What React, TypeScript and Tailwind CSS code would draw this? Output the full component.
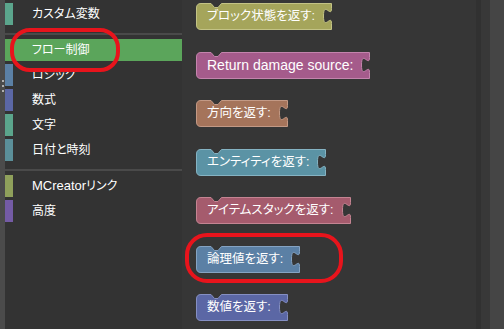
import { useLayoutEffect, useRef, useState } from "react"

const font = { fontFamily: '"Liberation Sans", "Noto Sans CJK JP", sans-serif' }

type Category = { label: string; latin?: string; colour: string; selected?: boolean } | "sep"

const categories: Category[] = [
  { label: "カスタム変数", colour: "bg-[#5ba58c]" },
  "sep",
  { label: "フロー制御", colour: "bg-[#5ba55b]", selected: true },
  { label: "ロジック", colour: "bg-[#5b80a5]" },
  { label: "数式", colour: "bg-[#5b67a5]" },
  { label: "文字", colour: "bg-[#5ba58c]" },
  { label: "日付と時刻", colour: "bg-[#5b8f99]" },
  "sep",
  { latin: "MCreator", label: "リンク", colour: "bg-[#8fa05b]" },
  { label: "高度", colour: "bg-[#745ba5]" },
]

const blocks = [
  { label: "ブロック状態を返す:", fill: "#a5a55b", stroke: "#c3c386", cjk: true },
  { label: "Return damage source:", fill: "#a55b8b", stroke: "#c484ad", cjk: false },
  { label: "方向を返す:", fill: "#a5745b", stroke: "#c39985", cjk: true },
  { label: "エンティティを返す:", fill: "#5b93a5", stroke: "#85b3c3", cjk: true },
  { label: "アイテムスタックを返す:", fill: "#a55b6d", stroke: "#c48492", cjk: true },
  { label: "論理値を返す:", fill: "#5b80a5", stroke: "#85a3c3", cjk: true },
  { label: "数値を返す:", fill: "#5b67a5", stroke: "#858fc3", cjk: true },
]

function blockPath(w: number, h: number) {
  return [
    "M 0.5,5",
    "Q 0.5,0.5 5,0.5",
    "H 15 L 18.5,4.5 H 22 L 25.5,0.5",
    `H ${w - 0.5}`,
    "V 5.5",
    `c 0,10 -8,-8 -8,7.5 s 8,-2.5 8,7.5`,
    `V ${h - 0.5}`,
    "H 5",
    `Q 0.5,${h - 0.5} 0.5,${h - 5}`,
    "Z",
  ].join(" ")
}

function Block({ label, fill, stroke, cjk }: (typeof blocks)[number]) {
  const h = 27
  const ref = useRef<HTMLDivElement>(null)
  const [width, setWidth] = useState(0)

  useLayoutEffect(() => {
    const measure = () => ref.current && setWidth(ref.current.offsetWidth)
    measure()
    document.fonts?.ready.then(measure)
  }, [])

  return (
    <div ref={ref} className="relative flex h-[27px] w-fit items-center pl-[11px] pr-[17px]">
      {width > 0 && (
        <svg className="absolute left-0 top-0" width={width} height={h}>
          <path d={blockPath(width, h)} fill={fill} stroke={stroke} strokeWidth={1} />
        </svg>
      )}
      <span
        className={`relative whitespace-nowrap text-white ${cjk ? "text-[12.5px] [font-feature-settings:'palt']" : "text-[14px]"}`}
      >
        {label}
      </span>
    </div>
  )
}

export default function App() {
  return (
    <div className="relative flex h-[329px] w-[504px] overflow-hidden bg-[#363636]" style={font}>
      <div className="relative w-[5px] shrink-0 bg-[#4b4b4b]">
        <div className="flex flex-col items-center gap-[3px] pt-[80px]">
          <span className="h-[2px] w-[2px] bg-[#b0b0b0]" />
          <span className="h-[2px] w-[2px] bg-[#b0b0b0]" />
          <span className="h-[2px] w-[2px] bg-[#b0b0b0]" />
        </div>
      </div>

      <div className="flex w-[177px] shrink-0 flex-col bg-[#333333] pt-[3px]">
        {categories.map((c, i) =>
          c === "sep" ? (
            <div key={i} className="flex h-[11px] items-center">
              <div className="h-[2px] w-full bg-[#4a4a4a]" />
            </div>
          ) : (
            <div
              key={i}
              className={`mb-[3px] flex h-[22px] items-center ${c.selected ? "bg-[#5ba55b]" : ""}`}
            >
              <span className={`h-full w-[8px] ${c.colour}`} />
              <span className="ml-[19px] text-[12px] text-white [font-feature-settings:'palt']">
                {c.latin && <span className="text-[13px]">{c.latin}</span>}
                {c.label}
              </span>
            </div>
          )
        )}
      </div>

      <div className="flex flex-1 flex-col gap-[21.5px] pl-[14px] pt-[3px]">
        {blocks.map((b) => (
          <Block key={b.label} {...b} />
        ))}
      </div>

      <div className="w-[5px] shrink-0 bg-[#313131]" />
      <div className="w-[9px] shrink-0 bg-[#383838]" />
      <div className="w-[14px] shrink-0 bg-[#454545]" />

      <div className="absolute left-[10px] top-[28px] h-[44px] w-[110px] rounded-[20px] border-[4px] border-[#e8141c]" />
      <div className="absolute left-[185px] top-[233px] h-[50px] w-[158px] rounded-[22px] border-[4px] border-[#e8141c]" />
    </div>
  )
}
